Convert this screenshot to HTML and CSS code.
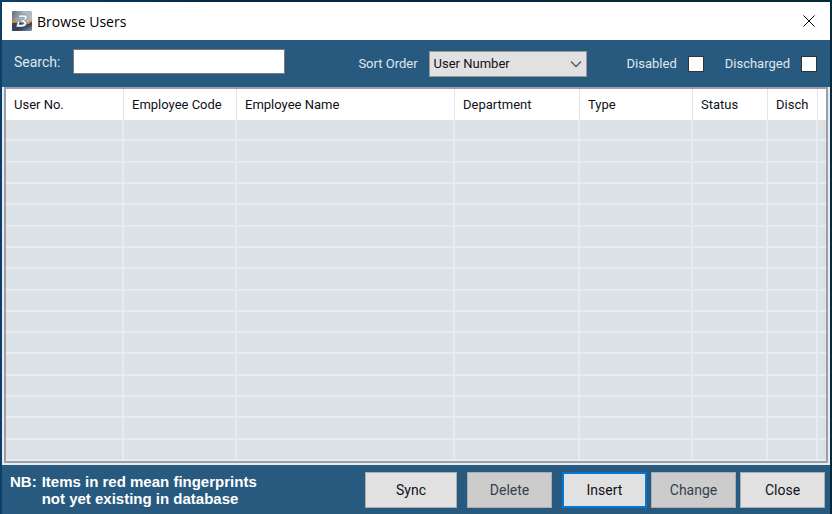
FILE: index.html
```html
<!DOCTYPE html>
<html lang="en">
<head>
  <meta charset="UTF-8" />
  <meta name="viewport" content="width=device-width, initial-scale=1.0"/>
  <title>Browse Users</title>
  <link rel="stylesheet" href="styles.css">
</head>
<body>

  <div class="window">
    <header class="titlebar">
      <svg class="logo" viewBox="0 0 20 20" aria-hidden="true">
        <defs>
          <linearGradient id="logoBg" x1="0" y1="0" x2="1" y2="0.5">
            <stop offset="0" stop-color="#5f6c79"/>
            <stop offset="0.5" stop-color="#a9b4be"/>
            <stop offset="1" stop-color="#b5bfc8"/>
          </linearGradient>
          <linearGradient id="logoBase" x1="0" y1="0" x2="1" y2="1">
            <stop offset="0" stop-color="#33445a"/>
            <stop offset="0.6" stop-color="#2f4259"/>
            <stop offset="1" stop-color="#8c9db0"/>
          </linearGradient>
        </defs>
        <rect width="20" height="20" rx="1" fill="url(#logoBg)"/>
        <path d="M0 12 Q5 10 10 12 Q16 13 20 10 V19 Q20 20 19 20 H0 Z" fill="url(#logoBase)"/>
        <path d="M0 11.2 Q3 10 6 11.5 M14 12.5 Q18 12 20 9.5" fill="none" stroke="#f08a24" stroke-width="1.8"/>
        <path d="M7 4 H13 Q16 4.2 15.2 7 Q14.6 9.2 12.4 9.7 Q15.4 10.3 14.6 13 Q13.6 16 10 16 H4.2 L5.8 10 H8 L7 13.6 H10 Q11.6 13.4 11.8 12.2 Q11.8 11 10 11 H8.6 L9.2 8.8 H10.8 Q12.4 8.6 12.6 7.4 Q12.6 6.4 11.4 6.4 H6.4 Z" fill="#f8fafb" stroke="#3b4c60" stroke-width="0.4"/>
      </svg>
      <h1>Browse Users</h1>
      <button class="close" aria-label="Close window">
        <svg viewBox="0 0 12 12" aria-hidden="true"><path d="M0.5 0.5 L11.5 11.5 M11.5 0.5 L0.5 11.5"/></svg>
      </button>
    </header>

    <div class="toolbar">
      <div class="field search">
        <label for="search">Search:</label>
        <input type="text" id="search">
      </div>
      <div class="field sort">
        <label for="sort">Sort Order</label>
        <div class="select">
          <select id="sort">
            <option>User Number</option>
          </select>
          <svg viewBox="0 0 12 8" aria-hidden="true"><path d="M1 1.5 L6 6.5 L11 1.5"/></svg>
        </div>
      </div>
      <div class="checks">
        <div class="field">
          <label for="disabled">Disabled</label>
          <input type="checkbox" id="disabled">
        </div>
        <div class="field">
          <label for="discharged">Discharged</label>
          <input type="checkbox" id="discharged">
        </div>
      </div>
    </div>

    <div class="list">
      <table>
        <colgroup>
          <col class="col-no"><col class="col-code"><col class="col-name"><col class="col-dept">
          <col class="col-type"><col class="col-status"><col class="col-disch"><col>
        </colgroup>
        <thead>
          <tr>
            <th>User No.</th>
            <th>Employee Code</th>
            <th>Employee Name</th>
            <th>Department</th>
            <th>Type</th>
            <th>Status</th>
            <th>Disch</th>
            <th></th>
          </tr>
        </thead>
        <tbody>
          <tr><td></td><td></td><td></td><td></td><td></td><td></td><td></td><td></td></tr>
          <tr><td></td><td></td><td></td><td></td><td></td><td></td><td></td><td></td></tr>
          <tr><td></td><td></td><td></td><td></td><td></td><td></td><td></td><td></td></tr>
          <tr><td></td><td></td><td></td><td></td><td></td><td></td><td></td><td></td></tr>
          <tr><td></td><td></td><td></td><td></td><td></td><td></td><td></td><td></td></tr>
          <tr><td></td><td></td><td></td><td></td><td></td><td></td><td></td><td></td></tr>
          <tr><td></td><td></td><td></td><td></td><td></td><td></td><td></td><td></td></tr>
          <tr><td></td><td></td><td></td><td></td><td></td><td></td><td></td><td></td></tr>
          <tr><td></td><td></td><td></td><td></td><td></td><td></td><td></td><td></td></tr>
          <tr><td></td><td></td><td></td><td></td><td></td><td></td><td></td><td></td></tr>
          <tr><td></td><td></td><td></td><td></td><td></td><td></td><td></td><td></td></tr>
          <tr><td></td><td></td><td></td><td></td><td></td><td></td><td></td><td></td></tr>
          <tr><td></td><td></td><td></td><td></td><td></td><td></td><td></td><td></td></tr>
          <tr><td></td><td></td><td></td><td></td><td></td><td></td><td></td><td></td></tr>
          <tr><td></td><td></td><td></td><td></td><td></td><td></td><td></td><td></td></tr>
          <tr><td></td><td></td><td></td><td></td><td></td><td></td><td></td><td></td></tr>
        </tbody>
      </table>
    </div>

    <footer class="actions">
      <p class="note">
        <span>NB:</span>
        <span>Items in red mean fingerprints</span>
        <span class="second">not yet existing in database</span>
      </p>
      <div class="buttons">
        <button class="sync">Sync</button>
        <button disabled>Delete</button>
        <div class="edit">
          <button class="default">Insert</button>
          <button disabled>Change</button>
          <button>Close</button>
        </div>
      </div>
    </footer>
  </div>

</body>
</html>
```
FILE: styles.css
```css
* {
  box-sizing: border-box;
}

body {
  margin: 0;
  padding: 2px 2px 0;
  min-height: 100vh;
  display: flex;
  background: linear-gradient(to right, #0a3f68, #04263f 30%, #06293b);
  font-family: Roboto, "Liberation Sans", sans-serif;
  font-size: 13px;
  color: #101018;
}

button, input, select {
  font: inherit;
  color: inherit;
}

.window {
  flex: 1;
  min-width: 0;
  display: flex;
  flex-direction: column;
  background: #285a80;
}

.titlebar {
  height: 38px;
  padding: 0 15px 0 10px;
  display: flex;
  align-items: center;
  background: white;
}

.titlebar h1 {
  flex: 1;
  margin: 0 0 0 5px;
  font-family: "Open Sans", sans-serif;
  font-size: 14px;
  font-weight: normal;
  color: black;
}

.logo {
  width: 20px;
  height: 20px;
}

.close {
  padding: 0;
  border: none;
  background: none;
  display: flex;
}

.close svg {
  width: 12px;
  height: 12px;
  fill: none;
  stroke: black;
}

.toolbar {
  height: 47px;
  padding: 0 13px 0 12px;
  display: flex;
  align-items: center;
  color: #dfe8ef;
}

.field {
  display: flex;
  align-items: center;
}

.search {
  align-self: flex-start;
  gap: 13px;
  padding-top: 9px;
  font-size: 14px;
}

.search input {
  width: 212px;
  height: 25px;
  padding: 0 4px;
  border: 1px solid #7a7a7a;
  background: white;
  color: #101018;
}

.sort {
  gap: 11px;
  margin-left: auto;
}

.select {
  display: grid;
  align-items: center;
}

.select select,
.select svg {
  grid-area: 1 / 1;
}

.select select {
  appearance: none;
  width: 158px;
  height: 26px;
  padding: 0 20px 0 4px;
  border: 1px solid #999;
  border-radius: 0;
  background: #e1e1e1;
  color: #101018;
}

.select svg {
  width: 12px;
  height: 8px;
  justify-self: end;
  margin-right: 5px;
  fill: none;
  stroke: #555;
  stroke-width: 1.3;
  pointer-events: none;
}

.checks {
  display: flex;
  gap: 21px;
  margin-left: 40px;
}

.checks .field {
  gap: 11px;
}

input[type=checkbox] {
  appearance: none;
  width: 16px;
  height: 16px;
  margin: 0;
  border: 1px solid #333;
  background: white;
}

.list {
  flex: 1;
  display: flex;
  border: 2px solid #e9ebee;
  border-top: none;
}

table {
  width: 100%;
  table-layout: fixed;
  border-collapse: separate;
  border-spacing: 0;
  border: 2px solid #9a9faa;
  background: #dce1e5;
}

.col-no { width: 118px; }
.col-code { width: 113px; }
.col-name { width: 218px; }
.col-dept { width: 125px; }
.col-type { width: 113px; }
.col-status { width: 75px; }
.col-disch { width: 50px; }

th {
  height: 31px;
  padding: 0 0 0 8px;
  border-right: 1px solid #e5e5e5;
  background: white;
  font-weight: normal;
  text-align: left;
  white-space: nowrap;
}

td {
  height: 21px;
  padding: 0;
  border-right: 2px solid #e8ebee;
  border-bottom: 2px solid #e8ebee;
}

th:last-child,
td:last-child {
  border-right: none;
}

.actions {
  height: 49px;
  padding: 0 5px 0 8px;
  display: flex;
  align-items: center;
  justify-content: space-between;
}

.note {
  margin: 0;
  display: grid;
  grid-template-columns: auto auto;
  column-gap: 5px;
  font-family: "Liberation Sans", sans-serif;
  font-size: 15px;
  line-height: 17px;
  font-weight: bold;
  color: white;
}

.second {
  grid-column: 2;
}

.buttons {
  display: flex;
  gap: 10px;
  font-size: 14px;
}

.edit {
  display: flex;
  gap: 4px;
}

.buttons button {
  width: 85px;
  height: 36px;
  padding: 0;
  border: 1px solid #adadad;
  background: #e1e1e1;
}

.buttons .sync {
  width: 92px;
}

.buttons button:disabled {
  background: #ccc;
  color: #343e50;
}

.buttons .default {
  border: 2px solid #0078d7;
}
```
